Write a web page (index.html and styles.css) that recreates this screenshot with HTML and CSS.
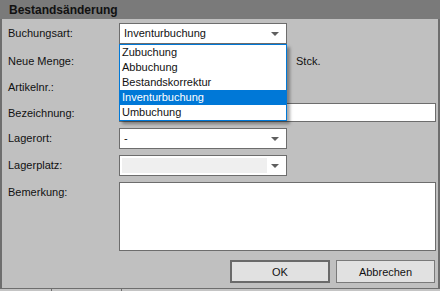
FILE: index.html
```html
<!DOCTYPE html>
<html lang="de">
<head>
  <meta charset="UTF-8" />
  <title>Bestandsänderung</title>
  <link rel="stylesheet" href="styles.css">
</head>
<body>
  <div class="window">
    <div class="titlebar">Bestandsänderung</div>

    <div class="form">
      <label class="lbl">Buchungsart:</label>
      <div class="combo"><span class="combo-text">Inventurbuchung</span><i class="arrow"></i></div>

      <label class="lbl">Neue Menge:</label>
      <div class="qty">
        <div class="textbox qty-box"></div>
        <span class="unit">Stck.</span>
      </div>

      <label class="lbl">Artikelnr.:</label>
      <div class="value"></div>

      <label class="lbl">Bezeichnung:</label>
      <div><div class="textbox wide"></div></div>

      <label class="lbl">Lagerort:</label>
      <div class="combo"><span class="combo-text">-</span><i class="arrow"></i></div>

      <label class="lbl">Lagerplatz:</label>
      <div class="combo disabled"><span class="combo-fill"></span><i class="arrow"></i></div>

      <label class="lbl">Bemerkung:</label>
      <div><div class="textbox wide memo"></div></div>

      <!-- open list of the Buchungsart combo -->
      <ul class="dropdown">
        <li>Zubuchung</li>
        <li>Abbuchung</li>
        <li>Bestandskorrektur</li>
        <li class="selected">Inventurbuchung</li>
        <li>Umbuchung</li>
      </ul>
    </div>

    <div class="buttons">
      <button class="btn default">OK</button>
      <button class="btn">Abbrechen</button>
    </div>
  </div>

  <div class="strip">
    <span class="col c1"></span>
    <span class="col c2"></span>
  </div>
</body>
</html>
```

FILE: styles.css
```css
body {
  margin: 0;
  width: 440px;
  height: 291px;
  overflow: hidden;
  font-family: 'Liberation Sans', Arial, sans-serif;
  font-size: 11px;
  color: #111;
  background-color: #c4c4c4;
}

.window {
  box-sizing: border-box;
  width: 440px;
  height: 289px;
  background-color: #c0c0c0;
  border-left: 2px solid #6e6e6e;
  border-right: 2px solid #6e6e6e;
  border-bottom: 1px solid #6e6e6e;
}

.titlebar {
  height: 19px;
  margin-left: -2px;
  margin-right: -2px;
  padding-left: 9px;
  background-color: #7a7a7a;
  font-weight: bold;
  font-size: 12px;
  line-height: 21px;
  color: #111;
}

/* Form grid */
.form {
  position: relative;
  display: grid;
  grid-template-columns: 111px 317px;
  grid-template-rows: 28px 26px 26px 25px 27px 27px 69px;
  margin-top: 4px;
  padding-left: 6px;
}

.lbl {
  padding-top: 4px;
  line-height: 13px;
}

.combo {
  box-sizing: border-box;
  position: relative;
  width: 168px;
  height: 21px;
  background-color: #fff;
  border: 1px solid #6d6d6d;
}

.combo-text {
  display: block;
  padding-left: 4px;
  line-height: 19px;
}

.combo.disabled .combo-fill {
  position: absolute;
  left: 2px;
  top: 2px;
  width: 145px;
  height: 15px;
  background-color: #efefef;
}

.arrow {
  position: absolute;
  right: 7px;
  top: 8px;
  width: 0;
  height: 0;
  border-left: 4px solid transparent;
  border-right: 4px solid transparent;
  border-top: 4px solid #5f5f5f;
}

.textbox {
  box-sizing: border-box;
  background-color: #fff;
  border: 1px solid #6d6d6d;
}

.qty {
  display: flex;
  align-items: flex-start;
}

.qty-box {
  width: 168px;
  height: 20px;
}

.unit {
  margin-left: 9px;
  padding-top: 4px;
  line-height: 13px;
}

.wide {
  width: 317px;
  height: 19px;
}

.memo {
  height: 69px;
}

/* Open list */
.dropdown {
  position: absolute;
  left: 117px;
  top: 21px;
  box-sizing: border-box;
  width: 168px;
  height: 77px;
  margin: 0;
  padding: 0;
  list-style: none;
  background-color: #fff;
  border: 1px solid #0078d7;
  box-shadow: 3px 3px 3px rgba(0, 0, 0, 0.35);
}

.dropdown li {
  height: 15px;
  padding-left: 2px;
  line-height: 15px;
}

.dropdown li.selected {
  background-color: #0078d7;
  color: #fff;
}

/* Buttons */
.buttons {
  display: flex;
  justify-content: flex-end;
  gap: 6px;
  margin-top: 9px;
  padding-right: 3px;
}

.btn {
  box-sizing: border-box;
  height: 23px;
  padding: 0;
  font-family: 'Liberation Sans', Arial, sans-serif;
  font-size: 11px;
  color: #111;
  background-color: #e1e1e1;
  border: 1px solid #7a7a7a;
  width: 99px;
}

.btn.default {
  width: 100px;
  border: 2px solid #6a6a6a;
}

/* grid header below the dialog */
.strip {
  position: relative;
  height: 2px;
}

.col {
  position: absolute;
  top: 0;
  width: 1px;
  height: 2px;
  background-color: #6e6e6e;
}

.c1 { left: 51px; }
.c2 { left: 121px; }
```
